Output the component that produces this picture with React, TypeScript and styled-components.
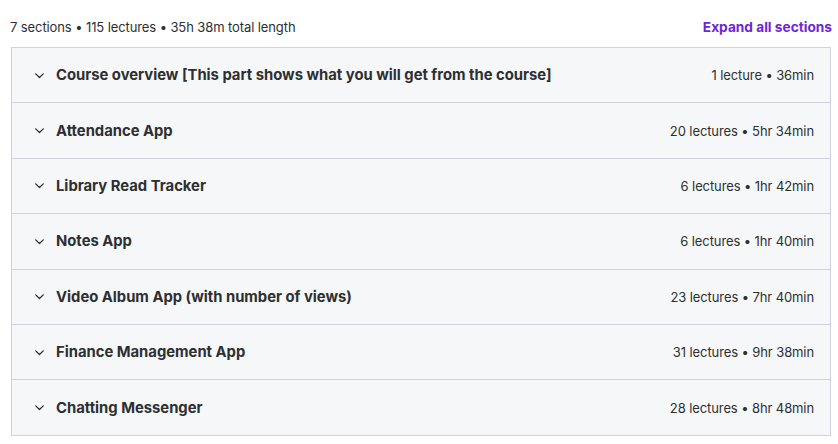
import React from 'react';
import styled, { createGlobalStyle } from 'styled-components';

const GlobalStyle = createGlobalStyle`
	html, body {
		margin: 0;
		padding: 0;
		background: #ffffff;
	}
	body {
		font-family: Inter, "Noto Sans", "Liberation Sans", sans-serif;
		color: #2d2f31;
	}
`;

type Section = {
	title: string;
	lectures: number;
	length: string;
};

const sections: Section[] = [
	{ title: 'Course overview [This part shows what you will get from the course]', lectures: 1, length: '36min' },
	{ title: 'Attendance App', lectures: 20, length: '5hr 34min' },
	{ title: 'Library Read Tracker', lectures: 6, length: '1hr 42min' },
	{ title: 'Notes App', lectures: 6, length: '1hr 40min' },
	{ title: 'Video Album App (with number of views)', lectures: 23, length: '7hr 40min' },
	{ title: 'Finance Management App', lectures: 31, length: '9hr 38min' },
	{ title: 'Chatting Messenger', lectures: 28, length: '8hr 48min' },
];

const Chevron = () => (
	<ChevronSvg viewBox="0 0 12 12" aria-hidden="true">
		<path d="M2.5 4.5 L6 7.8 L9.5 4.5" fill="none" stroke="#2d2f31" strokeWidth="1.2" strokeLinecap="round" strokeLinejoin="round" />
	</ChevronSvg>
);

const App: React.FC = () => {
	return (
		<>
			<GlobalStyle />
			<Page>
				<Summary>
					<SummaryText>7 sections • 115 lectures • 35h 38m total length</SummaryText>
					<ExpandLink>Expand all sections</ExpandLink>
				</Summary>
				<Accordion>
					{sections.map((section) => (
						<SectionRow key={section.title}>
							<TitleGroup>
								<Chevron />
								<SectionTitle>{section.title}</SectionTitle>
							</TitleGroup>
							<SectionMeta>
								{section.lectures} {section.lectures === 1 ? 'lecture' : 'lectures'} • {section.length}
							</SectionMeta>
						</SectionRow>
					))}
				</Accordion>
			</Page>
		</>
	);
};
export default App;

const Page = styled.div`
	width: 820px;
	padding: 0 8px 0 11px;
`;

const Summary = styled.div`
	display: flex;
	align-items: center;
	justify-content: space-between;
	height: 47px;
	box-sizing: border-box;
	padding-top: 7px;
	margin-left: -1px;
`;

const SummaryText = styled.span`
	font-size: 13px;
	color: #2d2f31;
	letter-spacing: -0.1px;
`;

const ExpandLink = styled.button`
	border: none;
	background: none;
	padding: 0;
	font-family: inherit;
	font-size: 13.7px;
	font-weight: 700;
	color: #6d28d2;
	cursor: pointer;
	margin-right: -1px;
`;

const Accordion = styled.div`
	border: 1px solid #d1d2e0;
	border-bottom: none;
`;

const SectionRow = styled.div`
	display: flex;
	align-items: center;
	justify-content: space-between;
	height: 54.4px;
	padding: 0 16px 0 21px;
	background: #f6f7f9;
	border-bottom: 1px solid #d1d2e0;
`;

const TitleGroup = styled.div`
	display: flex;
	align-items: center;
	gap: 10px;
`;

const ChevronSvg = styled.svg`
	width: 13px;
	height: 13px;
	flex-shrink: 0;
`;

const SectionTitle = styled.span`
	font-size: 14.8px;
	font-weight: 700;
	color: #2d2f31;
`;

const SectionMeta = styled.span`
	font-size: 13px;
	color: #2d2f31;
	letter-spacing: -0.1px;
`;
